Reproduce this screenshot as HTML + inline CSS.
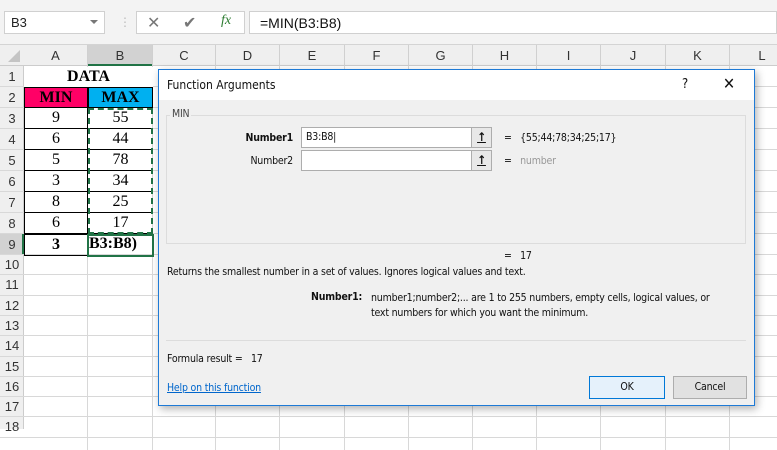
<!DOCTYPE html>
<html><head><meta charset="utf-8"><style>
*{box-sizing:border-box;margin:0;padding:0}
body{width:777px;height:429px;overflow:hidden;background:#fff;font-family:"Liberation Sans",sans-serif;position:relative;font-size:12px}
.a{position:absolute}
.tb{left:0;top:0;width:777px;height:45px;background:#f3f3f3;border-bottom:1px solid #d4d4d4}
.hdr{background:#efefef;color:#333;font-size:13px;text-align:center}
.vl{position:absolute;top:45px;width:1px;height:384px;background:#d8d8d8}
.hl{position:absolute;left:0;height:1px;width:777px;background:#d8d8d8}
.cell{position:absolute;font-family:"Liberation Serif",serif;font-size:16px;text-align:center;line-height:20px}
.dlg{left:158px;top:69px;width:597px;height:337px;background:#f0f0f0;border:1px solid #1e7ad6;box-shadow:2px 3px 8px rgba(0,0,0,.3);font-family:"DejaVu Sans Condensed","Liberation Sans",sans-serif;font-size:10.5px;letter-spacing:-0.2px;color:#111}
.inp{position:absolute;background:#fff;border:1px solid #adadad;height:21px}
.rb{position:absolute;width:21px;height:21px;border:1px solid #adadad;background:#e8e8e8;text-align:center;font-weight:bold;font-size:12px;line-height:18px}
</style></head><body>
<div class="a tb"></div>
<div class="a" style="left:4px;top:11px;width:101px;height:23px;background:#fff;border:1px solid #d0d0d0;font-size:13px;padding:3px 6px;color:#222">B3<span style="position:absolute;right:6px;top:8px;border-left:4px solid transparent;border-right:4px solid transparent;border-top:4px solid #777"></span></div>
<div class="a" style="left:119px;top:15px;color:#bbb;font-size:12px">⋮</div>
<div class="a" style="left:136px;top:11px;width:109px;height:23px;background:#fff;border:1px solid #d0d0d0"></div>
<div class="a" style="left:147px;top:13px;font-size:16px;color:#777">✕</div>
<div class="a" style="left:183px;top:13px;font-size:16px;color:#777">✔</div>
<div class="a" style="left:221px;top:13px;font-size:14px;color:#2e7d32;font-style:italic;font-family:'Liberation Serif',serif">fx</div>
<div class="a" style="left:249px;top:11px;width:528px;height:23px;background:#fff;border:1px solid #d0d0d0;font-size:14px;padding:3px 10px;color:#111">=MIN(B3:B8)</div>
<div class="a hdr" style="left:0;top:45px;width:777px;height:21px;border-bottom:1px solid #ccc"></div>
<div class="a" style="left:88px;top:45px;width:65px;height:21px;background:#d2d2d2;border-bottom:2px solid #217346"></div>
<div class="a" style="left:0;top:66px;width:24px;height:363px;background:#efefef;border-right:1px solid #ccc"></div>
<div class="a" style="left:0;top:234px;width:24px;height:21px;background:#d2d2d2;border-right:2px solid #217346"></div>
<div class="a" style="left:8px;top:50px;width:0;height:0;border-left:12px solid transparent;border-bottom:12px solid #c4c4c4"></div>
<div id="g"></div>
<script>
var cols=[24,88,153,216,280,345,409,473,537,601,666,730,795],n="ABCDEFGHIJKL",h="";
for(var i=0;i<12;i++){h+='<div class="a" style="left:'+cols[i]+'px;top:45px;width:'+(cols[i+1]-cols[i])+'px;height:21px;line-height:21px;text-align:center;font-size:13px;color:#333;border-right:1px solid #d0d0d0">'+n[i]+'</div>';
 h+='<div class="vl" style="left:'+(cols[i+1]-1)+'px;top:66px"></div>';}
for(var r=1;r<=18;r++){var y=r<=9?66+(r-1)*21:234+21+(r-10)*20.3;var hh=r<=9?21:20.3;h+='<div class="a" style="left:0;top:'+y+'px;width:24px;height:'+hh+'px;line-height:'+hh+'px;text-align:center;font-size:13px;color:#333">'+r+'</div>';
 h+='<div class="hl" style="top:'+Math.round(y+hh-1)+'px"></div>';}
document.getElementById('g').innerHTML=h;
</script>
<div class="cell" style="left:24px;top:67px;width:129px;font-weight:bold;background:#fff;height:20px">DATA</div>
<div class="cell" style="left:24px;top:87px;width:64px;height:21px;background:#ff0066;font-weight:bold;border:1px solid #000">MIN</div>
<div class="cell" style="left:88px;top:87px;width:65px;height:21px;background:#00b0f0;font-weight:bold;border:1px solid #000">MAX</div>
<div id="d"></div>
<script>
var A=[9,6,5,3,8,6],B=[55,44,78,34,25,17],s="";
for(var k=0;k<6;k++){var y=108+k*21;s+='<div class="cell" style="left:24px;top:'+y+'px;width:64px;height:21px;border:1px solid #000;border-top:none">'+A[k]+'</div><div class="cell" style="left:88px;top:'+y+'px;width:65px;height:21px;border-bottom:1px solid #000">'+B[k]+'</div>';}
document.getElementById('d').innerHTML=s;
</script>
<div class="cell" style="left:24px;top:234px;width:64px;height:22px;border:1px solid #000;font-weight:bold">3</div>
<div class="cell" style="left:88px;top:234px;width:65px;height:22px;font-weight:bold;text-align:left;padding-left:1px">B3:B8)</div>
<div class="a" style="left:88px;top:108px;width:65px;height:126px;border:2px dashed #217346"></div>
<div class="a" style="left:87px;top:234px;width:67px;height:23px;border:2px solid #217346"></div>
<div class="a dlg">
 <div class="a" style="left:0;top:0;width:595px;height:30px;background:#fff"></div>
 <div class="a" style="left:8px;top:8px;font-size:12px;letter-spacing:0">Function Arguments</div>
 <div class="a" style="left:523px;top:7px;font-size:13px">?</div>
 <div class="a" style="left:564px;top:4px;font-size:16px">✕</div>
 <div class="a" style="left:7px;top:45px;width:580px;height:129px;border:1px solid #dcdcdc"></div>
 <div class="a" style="left:11px;top:38px;background:#f0f0f0;padding:0 2px;color:#444">MIN</div>
 <div class="a" style="left:70px;top:62px;width:64px;text-align:right;font-weight:bold">Number1</div>
 <div class="a" style="left:70px;top:85px;width:64px;text-align:right">Number2</div>
 <div class="inp" style="left:142px;top:57px;width:171px;padding:3px 4px">B3:B8|</div>
 <div class="rb" style="left:312px;top:57px"><u>↑</u></div>
 <div class="inp" style="left:142px;top:80px;width:171px"></div>
 <div class="rb" style="left:312px;top:80px"><u>↑</u></div>
 <div class="a" style="left:345px;top:62px">=&nbsp;&nbsp; {55;44;78;34;25;17}</div>
 <div class="a" style="left:345px;top:85px">=&nbsp;&nbsp; <span style="color:#999">number</span></div>
 <div class="a" style="left:345px;top:180px">=&nbsp;&nbsp; 17</div>
 <div class="a" style="left:8px;top:196px">Returns the smallest number in a set of values. Ignores logical values and text.</div>
 <div class="a" style="left:152px;top:221px;font-weight:bold">Number1:</div>
 <div class="a" style="left:212px;top:221px;width:345px;line-height:15px">number1;number2;... are 1 to 255 numbers, empty cells, logical values, or text numbers for which you want the minimum.</div>
 <div class="a" style="left:7px;top:270px;width:580px;height:1px;background:#dcdcdc"></div>
 <div class="a" style="left:8px;top:283px">Formula result =&nbsp;&nbsp; 17</div>
 <div class="a" style="left:8px;top:312px;color:#0066cc;text-decoration:underline">Help on this function</div>
 <div class="a" style="left:430px;top:306px;width:76px;height:23px;background:#e5f1fb;border:1px solid #0078d7;text-align:center;line-height:21px">OK</div>
 <div class="a" style="left:514px;top:306px;width:74px;height:23px;background:#e1e1e1;border:1px solid #adadad;text-align:center;line-height:21px">Cancel</div>
</div>
</body></html>
